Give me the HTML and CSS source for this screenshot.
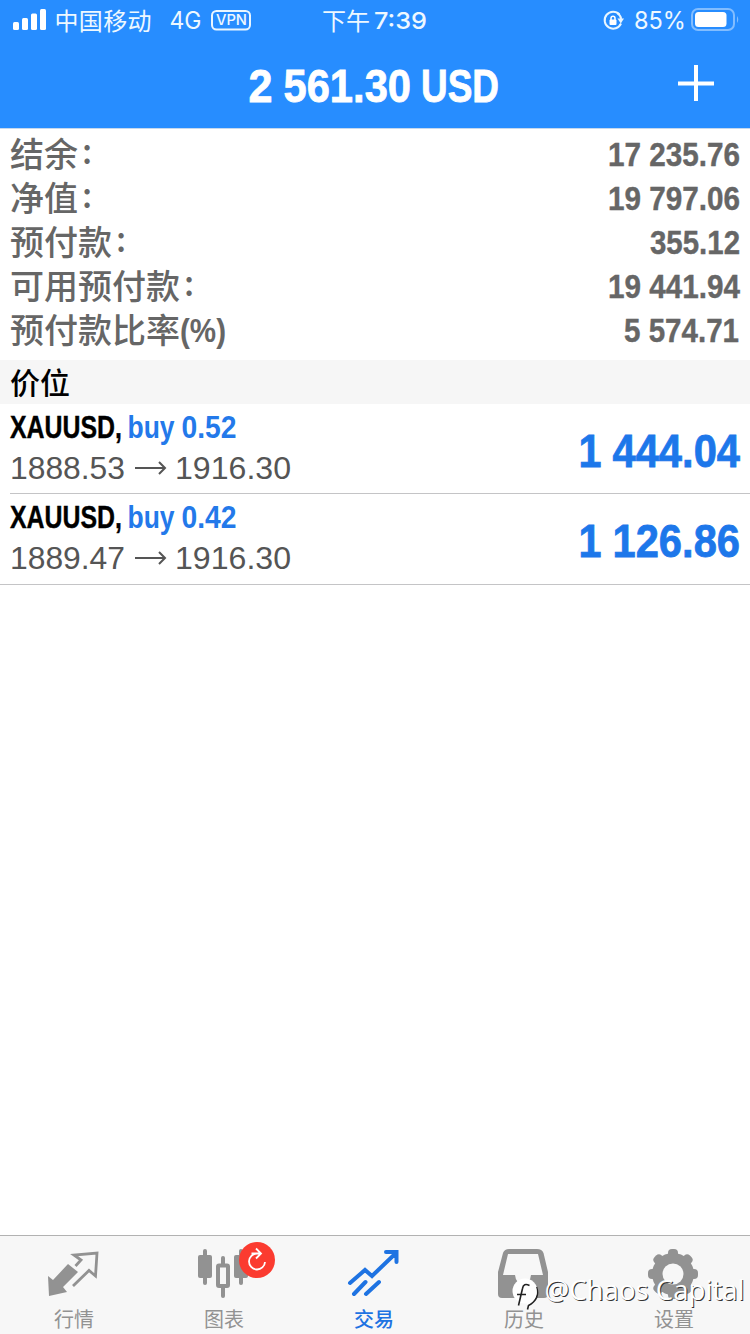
FILE: index.html
```html
<!DOCTYPE html>
<html lang="zh-CN">
<head>
<meta charset="utf-8">
<title>交易</title>
<link rel="stylesheet" href="styles.css">
</head>
<body>
<div class="app">
  <header class="header">
    <svg class="status" width="750" height="44" viewBox="0 0 750 44">
      <g fill="#fff">
        <rect x="13" y="22" width="6" height="8" rx="1.5"/>
        <rect x="22" y="18" width="6" height="12" rx="1.5"/>
        <rect x="31" y="13.500" width="6" height="16.500" rx="1.5"/>
        <rect x="40" y="9" width="6" height="21" rx="1.5"/>
      </g>
      <text class="cjk" x="54.500" y="29.500" textLength="97">中国移动</text>
      <text class="latin" x="169.500" y="29" textLength="32" lengthAdjust="spacingAndGlyphs">4G</text>
      <rect x="212" y="11" width="38" height="18.500" rx="4.500" fill="none" stroke="#e9f6ff" stroke-width="2"/>
      <text class="vpn" x="216" y="25" textLength="31" lengthAdjust="spacingAndGlyphs">VPN</text>
      <text class="cjk" x="322" y="29.500" textLength="48">下午</text>
      <text class="clock" x="374" y="29" textLength="53" lengthAdjust="spacingAndGlyphs">7:39</text>
      <path d="M619.500 14.500A8.500 8.500 0 1 0 621 23.500" fill="none" stroke="#e9f6ff" stroke-width="2"/>
      <path d="M617 12.800A8.500 8.500 0 0 1 621.200 19" fill="none" stroke="#e9f6ff" stroke-width="2"/>
      <path d="M617.500 18.500h6.500l-3.200 5z" fill="#e9f6ff"/>
      <rect x="609.500" y="19.500" width="7" height="5.500" rx="1" fill="#fff"/>
      <path d="M611 20v-1.700a2 2 0 0 1 4 0V20" fill="none" stroke="#fff" stroke-width="1.500"/>
      <text class="latin" x="634" y="29" textLength="52" lengthAdjust="spacingAndGlyphs">85%</text>
      <rect x="692" y="9" width="42" height="21" rx="6" fill="none" stroke="#82bdff" stroke-width="2"/>
      <rect x="695" y="12" width="31.500" height="15" rx="3.500" fill="#fff"/>
      <path d="M737 16q2.500 3.500 0 7z" fill="#82bdff"/>
    </svg>
    <svg class="titlebar" width="750" height="84" viewBox="0 0 750 84">
      <text class="title" y="57.500"><tspan x="248.500" textLength="24" lengthAdjust="spacingAndGlyphs">2</tspan> <tspan x="283.500" textLength="127.500" lengthAdjust="spacingAndGlyphs">561.30</tspan> <tspan x="421" textLength="78" lengthAdjust="spacingAndGlyphs">USD</tspan></text>
      <path d="M678 39.500h36M696 21v36" stroke="#fff" stroke-width="4"/>
    </svg>
  </header>

  <section class="account">
    <div class="line"><span class="label">结余<i class="colon">:</i></span><svg class="value" width="200" height="44"><text x="68" y="34" textLength="132" lengthAdjust="spacingAndGlyphs">17 235.76</text></svg></div>
    <div class="line"><span class="label">净值<i class="colon">:</i></span><svg class="value" width="200" height="44"><text x="68" y="34" textLength="132" lengthAdjust="spacingAndGlyphs">19 797.06</text></svg></div>
    <div class="line"><span class="label">预付款<i class="colon">:</i></span><svg class="value" width="200" height="44"><text x="110" y="34" textLength="90" lengthAdjust="spacingAndGlyphs">355.12</text></svg></div>
    <div class="line"><span class="label">可用预付款<i class="colon">:</i></span><svg class="value" width="200" height="44"><text x="68" y="34" textLength="132" lengthAdjust="spacingAndGlyphs">19 441.94</text></svg></div>
    <div class="line"><span class="label">预付款比率</span><svg class="percent" width="48" height="44"><text x="0" y="34" textLength="46" lengthAdjust="spacingAndGlyphs">(%)</text></svg><svg class="value" width="200" height="44"><text x="84" y="34" textLength="115" lengthAdjust="spacingAndGlyphs">5 574.71</text></svg></div>
  </section>

  <h2 class="section">价位</h2>

  <main class="positions">
    <article class="position">
      <svg width="300" height="89" viewBox="0 0 300 89">
        <text class="symbol" x="0" y="34" textLength="112" lengthAdjust="spacingAndGlyphs">XAUUSD,</text>
        <text class="side" y="34"><tspan x="117.500" textLength="47" lengthAdjust="spacingAndGlyphs">buy</tspan> <tspan x="171.500" textLength="55" lengthAdjust="spacingAndGlyphs">0.52</tspan></text>
        <text class="price" x="0" y="75" textLength="115" lengthAdjust="spacingAndGlyphs">1888.53</text>
        <path class="arrow" d="M125 64h30M149 58l6 6l-6 6"/>
        <text class="price" x="165" y="75" textLength="116" lengthAdjust="spacingAndGlyphs">1916.30</text>
      </svg>
      <svg width="180" height="89" viewBox="0 0 180 89"><text class="profit" y="63"><tspan x="18.500" textLength="23" lengthAdjust="spacingAndGlyphs">1</tspan> <tspan x="52.500" textLength="127.500" lengthAdjust="spacingAndGlyphs">444.04</tspan></text></svg>
    </article>
    <article class="position">
      <svg width="300" height="89" viewBox="0 0 300 89">
        <text class="symbol" x="0" y="34" textLength="112" lengthAdjust="spacingAndGlyphs">XAUUSD,</text>
        <text class="side" y="34"><tspan x="117.500" textLength="47" lengthAdjust="spacingAndGlyphs">buy</tspan> <tspan x="171.500" textLength="55" lengthAdjust="spacingAndGlyphs">0.42</tspan></text>
        <text class="price" x="0" y="75" textLength="115" lengthAdjust="spacingAndGlyphs">1889.47</text>
        <path class="arrow" d="M125 64h30M149 58l6 6l-6 6"/>
        <text class="price" x="165" y="75" textLength="116" lengthAdjust="spacingAndGlyphs">1916.30</text>
      </svg>
      <svg width="180" height="89" viewBox="0 0 180 89"><text class="profit" y="63"><tspan x="18.500" textLength="23" lengthAdjust="spacingAndGlyphs">1</tspan> <tspan x="52.500" textLength="127.500" lengthAdjust="spacingAndGlyphs">126.86</tspan></text></svg>
    </article>
  </main>

  <nav class="tabs">
    <a class="tab">
      <svg width="60" height="60" viewBox="0 0 60 60">
        <path d="M4 32l5 4L24 20l10 8L19 43l4 5L5 52z" fill="#929292"/>
        <path d="M29 42L45 26.500l6.500 5.500L53 9l-23 2 7 5-5.500 6" fill="none" stroke="#929292" stroke-width="2.800"/>
      </svg>
      <span>行情</span>
    </a>
    <a class="tab">
      <svg width="60" height="60" viewBox="0 0 60 60">
        <g fill="#929292"><rect x="4" y="11" width="14" height="23" rx="2"/><rect x="9" y="5" width="4" height="36" rx="2"/><rect x="40" y="11" width="14" height="23" rx="2"/><rect x="45" y="5" width="4" height="36" rx="2"/><rect x="27" y="12" width="4" height="42" rx="2"/></g>
        <rect x="24" y="21.500" width="10" height="20.500" fill="#f7f7f7" stroke="#929292" stroke-width="4" rx="1"/>
      </svg>
      <svg class="badge" width="36" height="36" viewBox="0 0 36 36">
        <circle cx="18" cy="18" r="18" fill="#fb3b30"/>
        <path d="M18 11.500A8 8 0 1 0 26 20M12.500 11.500H21M17 6.500l5 5-5 5" fill="none" stroke="#fff" stroke-width="1.800"/>
      </svg>
      <span>图表</span>
    </a>
    <a class="tab active">
      <svg width="60" height="60" viewBox="0 0 60 60">
        <path d="M6 39L21 26l7 6L52 9M42 8h10.500v10M10 50l11.500-12M22 50l13-12" fill="none" stroke="#1e73e2" stroke-width="4" stroke-linecap="round"/>
      </svg>
      <span>交易</span>
    </a>
    <a class="tab">
      <svg width="60" height="60" viewBox="0 0 60 60">
        <path fill="#929292" fill-rule="evenodd" d="M15 5h28q5 0 6.500 4L54 28v22q0 4-4 4H8q-4 0-4-4V28L9 9q1.500-4 6-4zM14 10L9 31h12q1 9 8 9t8-9h12L44 10z"/>
      </svg>
      <span>历史</span>
    </a>
    <a class="tab">
      <svg width="60" height="60" viewBox="0 0 60 60">
        <g fill="#929292"><circle cx="29" cy="30" r="21"/>
          <rect x="24" y="5" width="10" height="50" rx="4"/><rect x="24" y="5" width="10" height="50" rx="4" transform="rotate(45 29 30)"/><rect x="24" y="5" width="10" height="50" rx="4" transform="rotate(90 29 30)"/><rect x="24" y="5" width="10" height="50" rx="4" transform="rotate(135 29 30)"/></g>
        <circle cx="29" cy="30" r="10.500" fill="#f7f7f7"/>
      </svg>
      <span>设置</span>
    </a>
    <svg class="watermark" width="240" height="50" viewBox="0 0 240 50">
      <circle cx="15" cy="20" r="12.500" fill="#fff"/>
      <path d="M19.500 14.500q-6-3-7 3l-4 17M7 23.500h9M26.500 16q4 12-8 18.500l-1 4" fill="none" stroke="#222" stroke-width="1.600"/>
      <path d="M25 15q4 12-8 18" fill="none" stroke="#fff" stroke-width="1.600"/>
      <text x="34.500" y="29" textLength="200" lengthAdjust="spacingAndGlyphs">@Chaos Capital</text>
    </svg>
  </nav>
</div>
</body>
</html>
```
FILE: styles.css
```css
* { box-sizing: border-box; }
body {
  margin: 0;
  background: #fff;
  font-family: "Liberation Sans", "Noto Sans CJK SC", sans-serif;
}
svg { display: block; flex: none; overflow: visible; }
.app { display: flex; flex-direction: column; width: 750px; height: 1334px; overflow: hidden; }

.header { height: 129px; background: #278dff; border-bottom: 1px solid #c5d8ee; }
.status text { fill: #eef8ff; }
.status .cjk { font: 24px "Noto Sans CJK SC", sans-serif; }
.status .latin { font: 24px Inter, sans-serif; }
.status .clock { font: 500 23.5px Inter, sans-serif; }
.status .vpn { font: 500 14.5px Inter, sans-serif; }
.title { font-size: 47px; font-weight: 700; fill: #fff; stroke: #fff; stroke-width: 0.8px; }

.account { height: 231px; padding: 3px 10px 0; color: #666; }
.line { display: flex; height: 44px; }
.label { margin-top: -1px; font: 500 34px/44px "Noto Sans CJK SC", sans-serif; }
.colon { display: inline-block; margin-left: 4px; font-style: normal; transform: translateY(-3px); }
.value { margin-left: auto; }
.value text, .percent text { font-size: 33px; font-weight: 700; fill: #666; }
.value text { stroke: #666; stroke-width: 0.4px; }

.section {
  height: 44px;
  margin: 0;
  padding-left: 10px;
  background: #f6f6f6;
  color: #000;
  font: 500 30px/43px "Noto Sans CJK SC", sans-serif;
}

.positions { flex: 1; }
.position {
  display: flex;
  justify-content: space-between;
  height: 90px;
  margin-left: 10px;
  padding-right: 10px;
  border-bottom: 1px solid #c4c4c6;
}
.position:last-child { height: 91px; margin-left: 0; padding-left: 10px; }
.symbol, .side { font-size: 32px; font-weight: 700; }
.symbol { stroke: #000; stroke-width: 0.4px; }
.side { fill: #2379ea; }
.price { font-size: 32px; fill: #555; }
.arrow { fill: none; stroke: #555; stroke-width: 2; }
.profit { font-size: 47px; font-weight: 700; fill: #1d77ea; stroke: #1d77ea; stroke-width: 0.8px; }

.tabs {
  position: relative;
  display: flex;
  height: 99px;
  padding-right: 2px;
  background: #f7f7f7;
  border-top: 1px solid #b2b2b2;
}
.tab {
  position: relative;
  display: flex;
  flex: 0 0 150px;
  flex-direction: column;
  align-items: center;
  padding: 8px 2px 0 0;
  color: #929292;
  font: 20px/30px "Noto Sans CJK SC", sans-serif;
}
.active { color: #1e73e2; font-weight: 500; }
.badge { position: absolute; left: 89px; top: 6px; }
.watermark { position: absolute; left: 510px; top: 35px; }
.watermark text {
  font: 27px "Open Sans", sans-serif;
  fill: #fff;
  text-shadow: 1px 1px 0 #333;
}
```
